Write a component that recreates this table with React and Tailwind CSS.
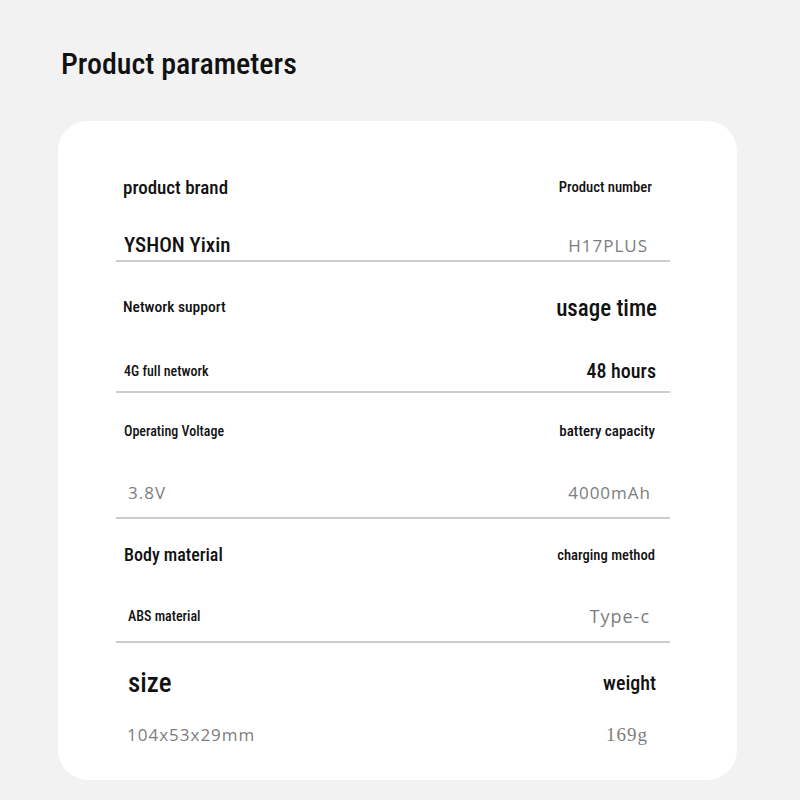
const cond = "font-['Roboto',sans-serif] font-stretch-condensed font-medium text-[#111111] leading-none whitespace-nowrap";
const gray = "font-['Open_Sans',sans-serif] text-[#7d7d7d] tracking-[1px] leading-none whitespace-nowrap";
const serif = "font-['Liberation_Serif',serif] text-[#7d7d7d] tracking-[1px] leading-none whitespace-nowrap";

function Line({ className = "", left, right }) {
  return (
    <div className={"flex h-[30px] items-center justify-between " + className}>
      {left}
      {right}
    </div>
  );
}

export default function App() {
  return (
    <div className="w-[800px] h-[800px] bg-[#f2f2f2] pt-[49px]">
      <h1 className={cond + " h-[31px] ml-[61px] text-[30px]"}>Product parameters</h1>

      <div className="mt-[41px] ml-[58px] w-[679px] h-[659px] rounded-[30px] bg-white pl-[58px] pr-[67px] pt-[51px]">
        {/* Section 1 */}
        <div className="border-b-2 border-[#cdcdcd]">
          <Line
            left={<span className={cond + " pl-[7px] text-[19px]"}>product brand</span>}
            right={<span className={cond + " pr-[18px] text-[14.7px]"}>Product number</span>}
          />
          <Line
            className="mt-[28px] h-[29px]"
            left={<span className={cond + " pl-[8px] text-[21px]"}>YSHON Yixin</span>}
            right={<span className={gray + " pr-[22px] text-[17px]"}>H17PLUS</span>}
          />
        </div>

        {/* Section 2 */}
        <div className="border-b-2 border-[#cdcdcd] pt-[31px] pb-[5px]">
          <Line
            left={<span className={cond + " pl-[7px] text-[15.5px]"}>Network support</span>}
            right={<span className={cond + " pr-[13px] text-[23px]"}>usage time</span>}
          />
          <Line
            className="mt-[33px]"
            left={<span className={cond + " pl-[8px] text-[14px]"}>4G full network</span>}
            right={<span className={cond + " pr-[14px] text-[20px]"}>48 hours</span>}
          />
        </div>

        {/* Section 3 */}
        <div className="border-b-2 border-[#cdcdcd] pt-[23px] pb-[10px]">
          <Line
            left={<span className={cond + " pl-[8px] text-[14px]"}>Operating Voltage</span>}
            right={<span className={cond + " pr-[15px] text-[15px]"}>battery capacity</span>}
          />
          <Line
            className="mt-[31px]"
            left={<span className={gray + " pl-[12px] text-[17px]"}>3.8V</span>}
            right={<span className={gray + " pr-[19px] text-[17px]"}>4000mAh</span>}
          />
        </div>

        {/* Section 4 */}
        <div className="border-b-2 border-[#cdcdcd] pt-[21px] pb-[10px]">
          <Line
            left={<span className={cond + " pl-[8px] text-[18px]"}>Body material</span>}
            right={<span className={cond + " pr-[15px] text-[14.6px]"}>charging method</span>}
          />
          <Line
            className="mt-[31px]"
            left={<span className={cond + " pl-[12px] text-[14px]"}>ABS material</span>}
            right={<span className={gray + " pr-[20px] text-[18px]"}>Type-c</span>}
          />
        </div>

        {/* Section 5 */}
        <div className="pt-[25px]">
          <Line
            left={<span className={cond + " pl-[12px] text-[27px]"}>size</span>}
            right={<span className={cond + " pr-[14px] text-[20px]"}>weight</span>}
          />
          <Line
            className="mt-[21px]"
            left={<span className={gray + " pl-[11px] text-[17px]"}>104x53x29mm</span>}
            right={<span className={serif + " pr-[22px] text-[19px]"}>169g</span>}
          />
        </div>
      </div>
    </div>
  );
}
